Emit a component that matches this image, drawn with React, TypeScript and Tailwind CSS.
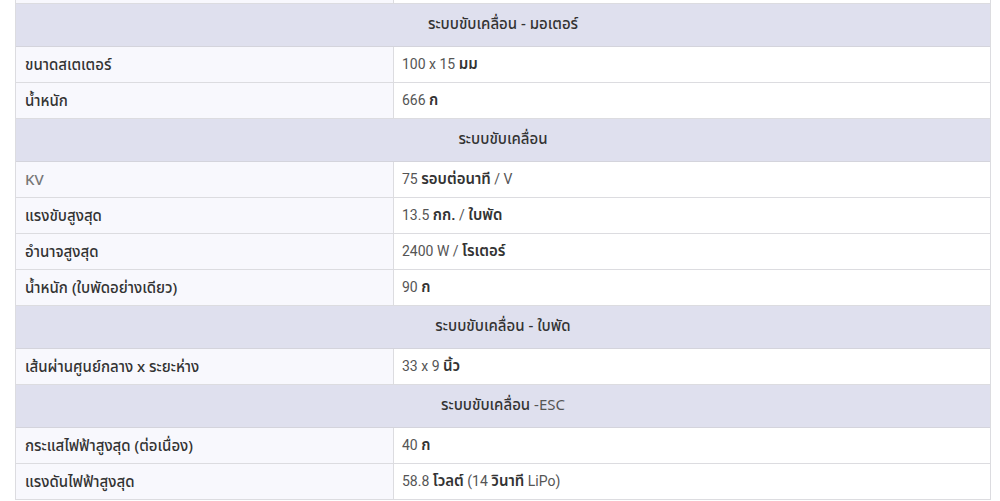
import React from "react";

type Row =
  | { kind: "h"; title: React.ReactNode }
  | { kind: "d"; label: string; value: React.ReactNode; muted?: boolean };

const B = ({ children }: { children: React.ReactNode }) => (
  <span className="font-semibold text-[15px] text-[#333]">{children}</span>
);

const rows: Row[] = [
  { kind: "d", label: "", value: "" },
  { kind: "h", title: <>ระบบขับเคลื่อน - มอเตอร์</> },
  { kind: "d", label: "ขนาดสเตเตอร์", value: <>100 x 15 <B>มม</B></> },
  { kind: "d", label: "น้ำหนัก", value: <>666 <B>ก</B></> },
  { kind: "h", title: <>ระบบขับเคลื่อน</> },
  { kind: "d", label: "KV", muted: true, value: <>75 <B>รอบต่อนาที</B> / V</> },
  { kind: "d", label: "แรงขับสูงสุด", value: <>13.5 <B>กก.</B> / <B>ใบพัด</B></> },
  { kind: "d", label: "อำนาจสูงสุด", value: <>2400 W / <B>โรเตอร์</B></> },
  { kind: "d", label: "น้ำหนัก (ใบพัดอย่างเดียว)", value: <>90 <B>ก</B></> },
  { kind: "h", title: <>ระบบขับเคลื่อน - ใบพัด</> },
  { kind: "d", label: "เส้นผ่านศูนย์กลาง x ระยะห่าง", value: <>33 x 9 <B>นิ้ว</B></> },
  { kind: "h", title: <>ระบบขับเคลื่อน <span className="font-normal text-[#555]">-ESC</span></> },
  { kind: "d", label: "กระแสไฟฟ้าสูงสุด (ต่อเนื่อง)", value: <>40 <B>ก</B></> },
  { kind: "d", label: "แรงดันไฟฟ้าสูงสุด", value: <>58.8 <B>โวลต์</B> (14 <B>วินาที</B> LiPo)</> },
];

export default function App() {
  return (
    <div className="w-[1000px] h-[501px] overflow-hidden bg-white">
      <div className="ml-[15px] w-[976px] mt-[-33px] border-l border-r border-t border-[#dcdce0]">
        {rows.map((r, i) =>
          r.kind === "h" ? (
            <div
              key={i}
              className="h-[43px] border-b border-[#d4d4dc] bg-[#dfe0ee] flex items-center justify-center text-[15px] text-[#333] font-medium"
              style={{ fontFamily: "'Noto Sans Thai', 'Roboto', 'Noto Sans', sans-serif" }}
            >
              <span>{r.title}</span>
            </div>
          ) : (
            <div key={i} className="h-[36px] border-b border-[#dcdce0] flex">
              <div
                className={`w-[378px] shrink-0 bg-[#f8f8fd] border-r border-[#dcdce0] flex items-center pl-[9px] text-[15px] font-medium ${
                  r.muted ? "text-[#777]" : "text-[#333]"
                }`}
                style={{ fontFamily: "'Noto Sans', 'Noto Sans Thai', sans-serif" }}
              >
                <span>{r.label}</span>
              </div>
              <div
                className="flex-1 bg-white flex items-center pl-[8px] text-[14px] text-[#555]"
                style={{ fontFamily: "'Roboto', 'Noto Sans Thai', sans-serif" }}
              >
                <span>{r.value}</span>
              </div>
            </div>
          )
        )}
      </div>
    </div>
  );
}
